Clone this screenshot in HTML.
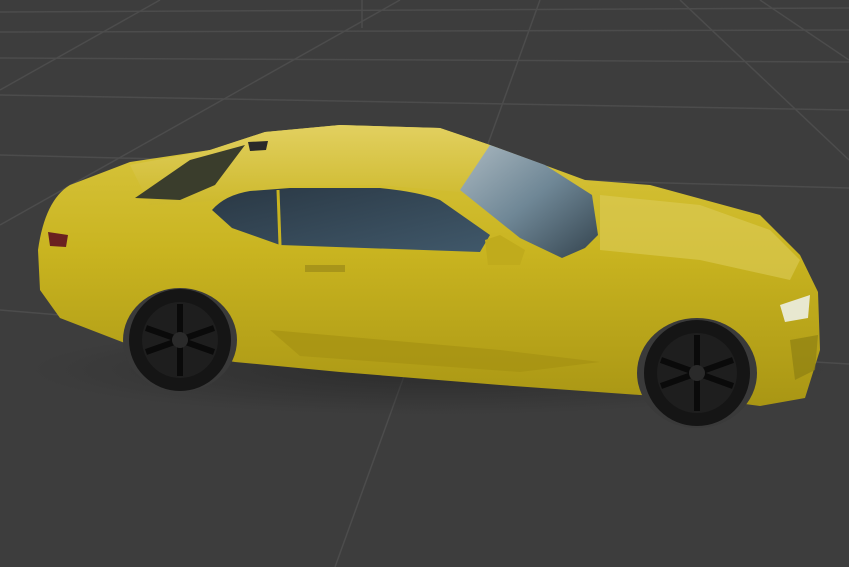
<!DOCTYPE html>
<html><head><meta charset="utf-8"><style>
html,body{margin:0;padding:0;background:#3d3d3d;overflow:hidden}
svg{display:block}
</style></head><body>
<svg width="849" height="567" viewBox="0 0 849 567" xmlns="http://www.w3.org/2000/svg">
<defs>
<linearGradient id="body" x1="0" y1="0" x2="0" y2="1">
<stop offset="0" stop-color="#d9c640"/>
<stop offset="0.45" stop-color="#c9b420"/>
<stop offset="1" stop-color="#a99614"/>
</linearGradient>
<linearGradient id="roof" x1="0" y1="0" x2="0" y2="1">
<stop offset="0" stop-color="#e2d060"/>
<stop offset="1" stop-color="#cdb92c"/>
</linearGradient>
<linearGradient id="win" x1="0" y1="0" x2="1" y2="1">
<stop offset="0" stop-color="#2a3844"/>
<stop offset="1" stop-color="#40586a"/>
</linearGradient>
<linearGradient id="wind" x1="0" y1="0" x2="1" y2="1">
<stop offset="0" stop-color="#aab8c0"/>
<stop offset="0.5" stop-color="#6f8796"/>
<stop offset="1" stop-color="#34444f"/>
</linearGradient>
<radialGradient id="shadow" cx="0.5" cy="0.5" r="0.5">
<stop offset="0" stop-color="#202020" stop-opacity="0.6"/>
<stop offset="1" stop-color="#202020" stop-opacity="0"/>
</radialGradient>
</defs>
<rect width="849" height="567" fill="#3d3d3d"/>
<g stroke="#4c4c4c" stroke-width="1.5" fill="none">
<line x1="0" y1="12" x2="849" y2="8"/>
<line x1="0" y1="32" x2="849" y2="30"/>
<line x1="0" y1="58" x2="849" y2="62"/>
<line x1="0" y1="95" x2="849" y2="110"/>
<line x1="0" y1="155" x2="200" y2="160"/>
<line x1="560" y1="180" x2="849" y2="188"/>
<line x1="0" y1="310" x2="60" y2="315"/>
<line x1="815" y1="362" x2="849" y2="364"/>
<line x1="540" y1="0" x2="335" y2="567"/>
<line x1="362" y1="0" x2="362" y2="28"/>
<line x1="680" y1="0" x2="849" y2="160"/>
<line x1="0" y1="225" x2="400" y2="0"/>
<line x1="0" y1="90" x2="160" y2="0"/>
<line x1="760" y1="0" x2="849" y2="60"/>
</g>
<ellipse cx="430" cy="370" rx="400" ry="45" fill="url(#shadow)"/>
<path d="M38,250 Q45,200 70,185 L130,162 L210,150 L265,132 L340,125 L440,128 L490,145 L585,180 L650,185 L760,215 L800,255 L818,292 L820,350 L805,398 L760,406 L700,398 L640,395 L500,385 L340,372 L235,362 L130,345 L60,318 L40,290 Z" fill="url(#body)"/>
<path d="M130,165 L210,150 L265,132 L340,125 L440,128 L490,145 L460,192 L380,185 L290,186 L230,200 L150,205 Z" fill="url(#roof)"/>
<path d="M135,198 L190,160 L245,145 L215,185 L180,200 Z" fill="#3a3d2c"/>
<path d="M248,142 L268,141 L266,150 L250,151 Z" fill="#2a2a2a"/>
<path d="M212,210 Q225,195 250,191 L290,188 L380,188 Q420,192 440,200 L490,235 L480,252 L280,245 L232,228 Z" fill="url(#win)"/>
<line x1="278" y1="190" x2="280" y2="245" stroke="#c9b420" stroke-width="3"/>
<path d="M460,190 L490,145 L545,165 L592,195 L598,235 L585,248 L562,258 L520,238 Z" fill="url(#wind)"/>
<path d="M485,240 L500,235 L525,250 L520,265 L488,265 Z" fill="#c0ab1c"/>
<path d="M600,195 L700,205 L770,230 L800,260 L790,280 L700,260 L600,250 Z" fill="#dccb58" opacity="0.6"/>
<path d="M780,305 L810,295 L808,318 L785,322 Z" fill="#e8e8d0"/>
<path d="M790,340 L818,335 L815,370 L795,380 Z" fill="#8f8012" opacity="0.7"/>
<path d="M48,232 L68,235 L66,247 L50,246 Z" fill="#6a2020"/>
<path d="M305,265 L345,265 L345,272 L305,272 Z" fill="#a8951a"/>
<path d="M270,330 L500,350 L600,362 L520,372 L300,356 Z" fill="#a59212" opacity="0.7"/>
<ellipse cx="180" cy="340" rx="57" ry="52" fill="#3a3a3a"/>
<circle cx="180" cy="340" r="51" fill="#151515"/>
<circle cx="180" cy="340" r="38" fill="#1e1e1e"/>
<g stroke="#0a0a0a" stroke-width="6">
<line x1="180" y1="304" x2="180" y2="376"/>
<line x1="146" y1="328" x2="214" y2="352"/>
<line x1="146" y1="352" x2="214" y2="328"/>
</g>
<circle cx="180" cy="340" r="8" fill="#2a2a2a"/>
<ellipse cx="697" cy="373" rx="60" ry="55" fill="#3a3a3a"/>
<circle cx="697" cy="373" r="53" fill="#151515"/>
<circle cx="697" cy="373" r="40" fill="#1e1e1e"/>
<g stroke="#0a0a0a" stroke-width="6">
<line x1="697" y1="335" x2="697" y2="411"/>
<line x1="661" y1="360" x2="733" y2="386"/>
<line x1="661" y1="386" x2="733" y2="360"/>
</g>
<circle cx="697" cy="373" r="8" fill="#2a2a2a"/>
</svg>
</body></html>
